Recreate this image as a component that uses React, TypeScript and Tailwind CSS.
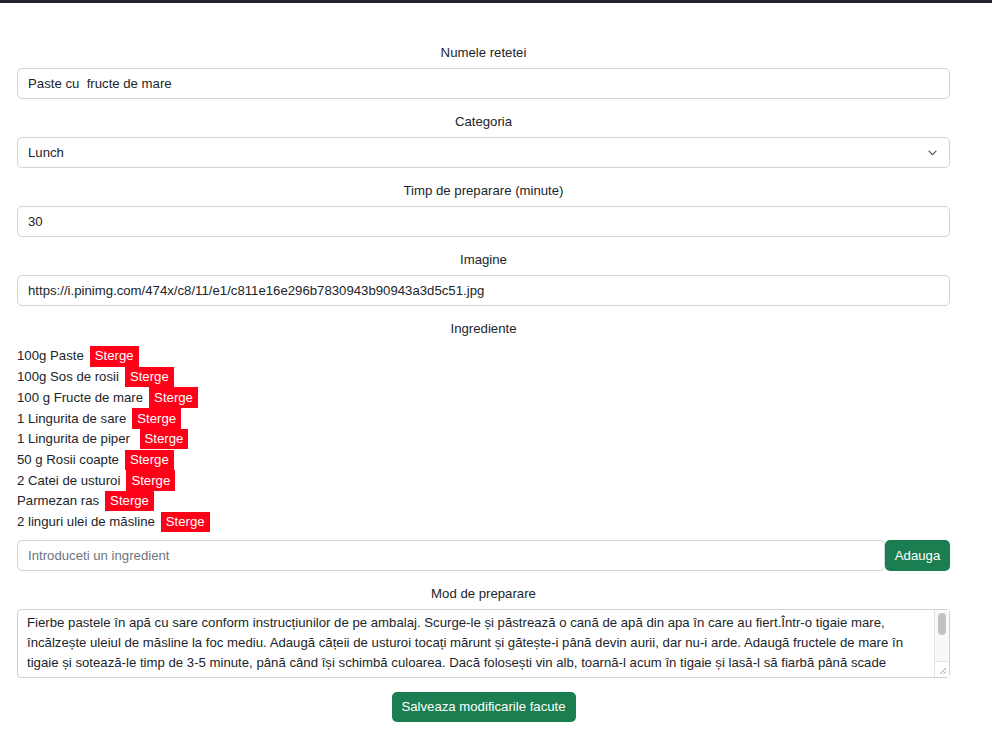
import React from 'react';

const ingredients = [
  '100g Paste',
  '100g Sos de rosii',
  '100 g Fructe de mare',
  '1 Lingurita de sare',
  '1 Lingurita de piper ',
  '50 g Rosii coapte',
  '2 Catei de usturoi',
  'Parmezan ras',
  '2 linguri ulei de măsline',
];

const preparation =
  'Fierbe pastele în apă cu sare conform instrucțiunilor de pe ambalaj. Scurge-le și păstrează o cană de apă din apa în care au fiert.Într-o tigaie mare, încălzește uleiul de măsline la foc mediu. Adaugă cățeii de usturoi tocați mărunt și gătește-i până devin aurii, dar nu-i arde. Adaugă fructele de mare în tigaie și sotează-le timp de 3-5 minute, până când își schimbă culoarea. Dacă folosești vin alb, toarnă-l acum în tigaie și lasă-l să fiarbă până scade alcoolul. Adaugă roșiile coapte și sosul de roșii, apoi lasă să fiarbă încă 5 minute. Adaugă pastele și puțină apă de la fiert, amestecă bine, condimentează cu sare și piper și servește cu parmezan ras.';

const inputClass =
  'block h-[31px] w-full rounded-[5px] border border-[#ced4da] bg-white px-[10px] text-[13.2px] text-[#212529] outline-none placeholder:text-[#6c757d]';

function Field({ label, children }: { label: string; children: React.ReactNode }) {
  return (
    <div className="mb-[12px]">
      <label className="mb-[5px] block pt-px text-center leading-[20px]">{label}</label>
      {children}
    </div>
  );
}

export default function App() {
  return (
    <div className="min-h-[740px] bg-white font-['Liberation_Sans',Arial,sans-serif] text-[13.2px] text-[#212529]">
      <div className="h-[3px] bg-[#212529]" />

      <form className="ml-[17px] w-[933px] pt-[39px]" onSubmit={(e) => e.preventDefault()}>
        <Field label="Numele retetei">
          <input className={inputClass} defaultValue="Paste cu  fructe de mare" />
        </Field>

        <Field label="Categoria">
          <div className="relative">
            <select className={`${inputClass} appearance-none`} defaultValue="Lunch">
              <option>Breakfast</option>
              <option>Lunch</option>
              <option>Dinner</option>
            </select>
            <svg
              className="pointer-events-none absolute right-[13px] top-[13px]"
              width="9"
              height="6"
              viewBox="0 0 9 6"
              fill="none"
            >
              <path d="M1 1.2l3.5 3.5 3.5-3.5" stroke="#495057" strokeWidth="1.2" strokeLinecap="round" strokeLinejoin="round" />
            </svg>
          </div>
        </Field>

        <Field label="Timp de preparare (minute)">
          <input className={inputClass} defaultValue="30" />
        </Field>

        <Field label="Imagine">
          <input
            className={inputClass}
            defaultValue="https://i.pinimg.com/474x/c8/11/e1/c811e16e296b7830943b90943a3d5c51.jpg"
          />
        </Field>

        {/* Ingrediente */}
        <label className="mb-[7px] block pt-px text-center leading-[20px]">Ingrediente</label>
        <ul className="mb-[8px]">
          {ingredients.map((item) => (
            <li key={item} className="flex h-[20.7px] items-center">
              <span className="whitespace-pre">{item}</span>
              <button
                type="button"
                className="ml-[6px] flex h-[20.5px] items-center bg-[#ff0019] px-[5px] text-[13.2px] text-white"
              >
                Sterge
              </button>
            </li>
          ))}
        </ul>

        <div className="mb-[12px] flex">
          <input className={inputClass} placeholder="Introduceti un ingredient" />
          <button
            type="button"
            className="h-[31px] w-[65px] shrink-0 rounded-[5px] bg-[#1b7e50] text-[13.2px] text-white"
          >
            Adauga
          </button>
        </div>

        <label className="mb-[5px] block pt-px text-center leading-[20px]">Mod de preparare</label>
        <div className="relative">
          <textarea
            className="block h-[69px] w-full resize-y overflow-y-scroll rounded-[4px] border border-[#d0d0d0] py-[3px] pl-[9px] pr-[22px] text-[13.2px] leading-[20px] text-[#212529] outline-none [scrollbar-width:none]"
            defaultValue={preparation}
          />
          {/* scrollbar drawn over the textarea edge */}
          <div className="pointer-events-none absolute right-px top-px flex h-[67px] w-[15px] flex-col border-l border-[#e4e4e4] bg-[#f8f8f8]">
            <div className="flex-1 px-[3px] pt-[3px]">
              <div className="h-[22px] rounded-full bg-[#c2c2c2]" />
            </div>
            <div className="relative h-[16px] rounded-br-[3px] border-t border-[#e4e4e4] bg-white">
              <svg className="absolute bottom-[2px] right-[2px]" width="8" height="8" viewBox="0 0 8 8">
                <path d="M7 1L1 7M7 4.5L4.5 7" stroke="#8a8a8a" strokeWidth="0.9" />
              </svg>
            </div>
          </div>
        </div>

        <div className="mt-[14px] flex justify-center">
          <button
            type="submit"
            className="h-[30px] w-[184px] rounded-[5px] bg-[#1b7e50] text-[13.2px] text-white"
          >
            Salveaza modificarile facute
          </button>
        </div>
      </form>
    </div>
  );
}
